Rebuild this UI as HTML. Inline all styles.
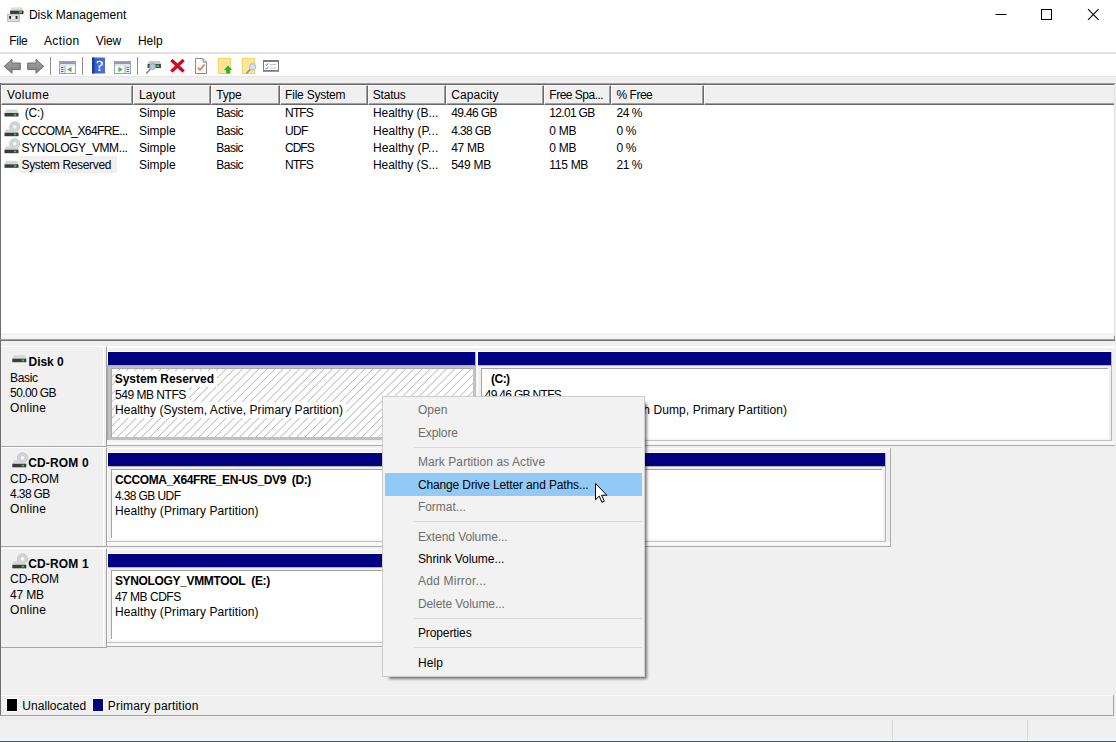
<!DOCTYPE html>
<html><head><meta charset="utf-8"><title>Disk Management</title>
<style>
html,body{margin:0;padding:0;}
body{width:1116px;height:742px;overflow:hidden;background:#fff;position:relative;font-family:"Liberation Sans",sans-serif;font-size:12px;color:#000;}
.a{position:absolute;}
.t{position:absolute;white-space:pre;line-height:16px;height:16px;}
.b{font-weight:bold;}
.hc{position:absolute;top:85px;height:20px;box-sizing:border-box;background:#f0f0f0;border-top:1px solid #fff;border-left:1px solid #fff;border-right:1px solid #696969;border-bottom:1px solid #696969;}
.hc:after{content:"";position:absolute;left:0;top:0;right:0;bottom:0;border-right:1px solid #a0a0a0;border-bottom:1px solid #a0a0a0;}
.hl{border-right:0;}.hl:after{border-right:0;}
.dh{position:absolute;left:1px;width:106px;height:100px;box-sizing:border-box;background:#f0f0f0;border-top:1px solid #fff;border-right:1px solid #a0a0a0;border-bottom:1px solid #a6a6a6;}
.dh:after{content:"";position:absolute;left:102px;top:0;bottom:0;width:1px;background:#fff;}
.bar{position:absolute;height:13px;background:#000080;}
.pbox{position:absolute;box-sizing:border-box;background:#fff;border:1px solid #a0a0a0;border-right-color:#e3e3e3;border-bottom-color:#e3e3e3;}
.sep{position:absolute;left:414px;width:228px;height:1px;background:#d7d7d7;}
.tsep{position:absolute;top:57px;width:1px;height:18px;background:#a0a0a0;}
</style></head><body>
<!-- title bar icon -->
<svg class="a" style="left:0;top:0" width="30" height="26" viewBox="0 0 30 26">
<defs><linearGradient id="gt" x1="0" y1="0" x2="0" y2="1"><stop offset="0" stop-color="#eceef0"/><stop offset="1" stop-color="#c4c8cc"/></linearGradient></defs>
<path d="M11.700 6.900h10.200l1.600 3.900h-13.400z" fill="url(#gt)"/>
<rect x="10.100" y="10.700" width="13.400" height="3.400" fill="#363636"/>
<rect x="18.900" y="11.300" width="3.100" height="1.900" fill="#2fd544"/>
<rect x="7.600" y="14.300" width="11.800" height="7.200" fill="#d9dbdd" stroke="#b4b6b8" stroke-width="0.900"/>
<rect x="11" y="16.900" width="4.800" height="1.300" fill="#f6f6f6"/>
<rect x="9.200" y="16" width="1.900" height="2.900" fill="#2a2a2a"/><rect x="15.600" y="16" width="1.900" height="2.900" fill="#2a2a2a"/>
</svg>
<!-- window controls -->
<svg class="a" style="left:990px;top:4px" width="120" height="22" viewBox="0 0 120 22">
<path d="M5.5 10.5h11" stroke="#000" stroke-width="1" fill="none"/>
<rect x="51.5" y="5.5" width="10" height="10" stroke="#000" stroke-width="1" fill="none"/>
<path d="M98 5.2l10.6 10.6M108.6 5.2l-10.600 10.600" stroke="#000" stroke-width="1.1" fill="none"/>
</svg>
<div class="a" style="left:0;top:52px;width:1116px;height:2px;background:#e1e1e1;"></div>
<!-- gray client background -->
<div class="a" style="left:0;top:76px;width:1116px;height:666px;background:#f0f0f0;"></div>
<div class="a" style="left:0;top:76px;width:1116px;height:1px;background:#e6e6e6;"></div>
<!--TB0-->
<svg class="a" style="left:0;top:53px" width="300" height="24" viewBox="0 53 300 24">
<defs>
<linearGradient id="ga" x1="0" y1="0" x2="0" y2="1"><stop offset="0" stop-color="#a8a8a8"/><stop offset="1" stop-color="#7c7c7c"/></linearGradient>
<linearGradient id="gh" x1="0" y1="0" x2="1" y2="0"><stop offset="0" stop-color="#1f3f9c"/><stop offset="0.25" stop-color="#3a5fd0"/><stop offset="1" stop-color="#4a6fe0"/></linearGradient>
</defs>
<!-- back / forward arrows -->
<path d="M4.300 66.300L12 59.300V63h8.300v6.600H12v3.700z" fill="url(#ga)" stroke="#6c6c6c" stroke-width="1" stroke-linejoin="round"/>
<path d="M43.700 66.300L36 59.300V63h-8.300v6.600H36v3.700z" fill="url(#ga)" stroke="#6c6c6c" stroke-width="1" stroke-linejoin="round"/>
<rect x="50" y="57" width="1" height="18" fill="#8d8d8d"/>
<rect x="82" y="57" width="1" height="18" fill="#8d8d8d"/>
<rect x="137" y="57" width="1" height="18" fill="#8d8d8d"/>
<!-- show/hide console tree -->
<g>
<rect x="59.500" y="61.500" width="16" height="12" fill="#fff" stroke="#9aa3b5" stroke-width="1"/>
<rect x="60" y="62" width="15" height="2" fill="#8f9bb4"/>
<rect x="60" y="64.500" width="15" height="1" fill="#c3c9d6"/>
<rect x="60" y="66" width="4.500" height="7" fill="#e4e8f0"/>
<rect x="64.500" y="66" width="1" height="7" fill="#9aa3b5"/>
<rect x="61" y="67" width="2.500" height="1" fill="#3a78d8"/><rect x="61" y="69" width="2.500" height="1" fill="#3a78d8"/><rect x="61" y="71" width="2.500" height="1" fill="#3a78d8"/>
<path d="M71.500 66.800v5.400l-4.300-2.700z" fill="#3fbf3f"/>
</g>
<!-- help -->
<rect x="92" y="57.500" width="13" height="16" fill="url(#gh)"/>
<rect x="92" y="57.500" width="2.500" height="16" fill="#1b3a8e" fill-opacity="0.700"/><text x="99.700" y="71.400" font-family="Liberation Serif,serif" font-size="15.500" fill="#fff" text-anchor="middle" stroke="#fff" stroke-width="0.300">?</text>
<!-- show/hide action pane -->
<g>
<rect x="114.500" y="61.500" width="16" height="12" fill="#fff" stroke="#9aa3b5" stroke-width="1"/>
<rect x="115" y="62" width="15" height="2" fill="#8f9bb4"/>
<rect x="115" y="64.500" width="15" height="1" fill="#c3c9d6"/>
<rect x="125.500" y="66" width="4.500" height="7" fill="#e4e8f0"/>
<rect x="124.500" y="66" width="1" height="7" fill="#9aa3b5"/>
<rect x="126.500" y="67" width="2.500" height="1" fill="#3a78d8"/><rect x="126.500" y="69" width="2.500" height="1" fill="#3a78d8"/><rect x="126.500" y="71" width="2.500" height="1" fill="#3a78d8"/>
<path d="M118.500 66.800v5.400l4.300-2.700z" fill="#3fbf3f"/>
</g>
<!-- connect / rescan drive -->
<g>
<path d="M149 61h10.500l1.500 3h-13.500z" fill="#c9c9c9"/>
<rect x="147.500" y="64" width="13.500" height="4" fill="#4a4a4a"/>
<rect x="156.500" y="65" width="2.500" height="2" fill="#2fd13f"/>
<circle cx="152.600" cy="66.500" r="3" fill="#bcd6ec" fill-opacity="0.900" stroke="#8fa4b8" stroke-width="1"/>
<path d="M150.300 69l-4 4.500" stroke="#6c7a88" stroke-width="1.300" fill="none"/>
</g>
<!-- delete X -->
<path d="M171.300 60l12.400 11.500M183.700 60l-12.400 11.500" stroke="#d00a1e" stroke-width="3.200" fill="none"/>
<!-- document check -->
<g>
<path d="M195.500 58.500h7.500l3.500 3.500v11.500h-11z" fill="#fafafa" stroke="#8c8c8c" stroke-width="1"/>
<path d="M203 58.500v3.500h3.500" fill="#e6e6e6" stroke="#8c8c8c" stroke-width="1"/>
<path d="M197.800 67.500l2.200 2.500l4.500-5.500" stroke="#ea6a30" stroke-width="1.400" fill="none"/>
</g>
<!-- yellow page + green arrow -->
<g>
<rect x="218.500" y="58.500" width="12" height="15" fill="#fbe596" stroke="#f3d26a" stroke-width="1"/>
<path d="M228 65.500l4 4.500h-2.200v3.500h-3.600v-3.500h-2.200z" fill="#19b92b"/>
</g>
<!-- yellow page + magnifier -->
<g>
<rect x="242.500" y="58.500" width="12" height="15" fill="#fbe596" stroke="#f3d26a" stroke-width="1"/>
<path d="M250.400 69.300l-4 4.200" stroke="#8a8a8a" stroke-width="1.400" fill="none"/>
<circle cx="252.600" cy="66.900" r="3.200" fill="#cfe4f4" stroke="#a9bccb" stroke-width="1"/>
</g>
<!-- properties list -->
<g>
<rect x="263.500" y="60.500" width="15" height="10.500" fill="#fff" stroke="#7a7a7a" stroke-width="1"/><rect x="263" y="70" width="16" height="1.500" fill="#7a7a7a"/>
<rect x="263" y="60" width="16" height="2" fill="#7a7a7a"/>
<path d="M265.500 64.500l1 1l1.800-2.200M265.500 68l1 1l1.800-2.200" stroke="#2f7fe0" stroke-width="1" fill="none"/>
<rect x="270" y="64" width="6" height="1" fill="#c4c4c4"/><rect x="270" y="67.500" width="6" height="1" fill="#c4c4c4"/>
</g>
</svg>
<!--TB1-->
<!-- list view frame -->
<div class="a" style="left:0;top:83px;width:1115px;height:1px;background:#a0a0a0;"></div>
<div class="a" style="left:0;top:84px;width:1115px;height:1px;background:#696969;"></div>
<div class="a" style="left:0;top:83px;width:1px;height:633px;background:#6d6d6d;"></div>
<div class="a" style="left:0;top:718px;width:1116px;height:1px;background:#e4e4e4;"></div>
<div class="a" style="left:1px;top:85px;width:1113px;height:248px;background:#fff;"></div>
<div class="a" style="left:1px;top:333px;width:1113px;height:6px;background:#f6f6f6;"></div><div class="a" style="left:1px;top:334px;width:1113px;height:1px;background:#efefef;"></div><div class="a" style="left:1px;top:337px;width:1113px;height:1px;background:#f0f0f0;"></div>
<div class="a" style="left:1114px;top:84px;width:1px;height:252px;background:#e3e3e3;"></div>
<!-- header cells -->
<div class="hc" style="left:1px;width:132px;"></div>
<div class="hc" style="left:133px;width:78px;"></div>
<div class="hc" style="left:211px;width:69px;"></div>
<div class="hc" style="left:280px;width:88px;"></div>
<div class="hc" style="left:368px;width:78px;"></div>
<div class="hc" style="left:446px;width:98px;"></div>
<div class="hc" style="left:544px;width:67px;"></div>
<div class="hc" style="left:611px;width:93px;"></div>
<div class="hc hl" style="left:704px;width:410px;"></div>
<!-- selected row -->
<div class="a" style="left:19px;top:156px;width:98px;height:17px;background:#f0f0f0;"></div>
<svg class="a" style="left:0;top:104px" width="24" height="72" viewBox="0 104 24 72"><path d="M6.0 109.5h11l1.500 3.500h-14z" fill="#d3d7db"/><rect x="4.5" y="113.0" width="14" height="3.500" fill="#3b3b3b"/><rect x="13.9" y="113.9" width="2.400" height="1.700" fill="#2ed23e"/><circle cx="14.7" cy="126.8" r="5" fill="#d6d9dc" stroke="#b4b8bc" stroke-width="0.800"/><circle cx="14.7" cy="126.8" r="2.500" fill="#f0f1f2" stroke="#b9bcc0" stroke-width="0.700"/><circle cx="14.7" cy="126.8" r="1.100" fill="#fff"/><path d="M6.0 129.2h11l1.500 3.500h-14z" fill="#d3d7db"/><rect x="4.5" y="132.7" width="14" height="3.500" fill="#3b3b3b"/><rect x="13.9" y="133.6" width="2.400" height="1.700" fill="#2ed23e"/><circle cx="14.7" cy="143.8" r="5" fill="#d6d9dc" stroke="#b4b8bc" stroke-width="0.800"/><circle cx="14.7" cy="143.8" r="2.500" fill="#f0f1f2" stroke="#b9bcc0" stroke-width="0.700"/><circle cx="14.7" cy="143.8" r="1.100" fill="#fff"/><path d="M6.0 146.2h11l1.500 3.500h-14z" fill="#d3d7db"/><rect x="4.5" y="149.7" width="14" height="3.500" fill="#3b3b3b"/><rect x="13.9" y="150.6" width="2.400" height="1.700" fill="#2ed23e"/><path d="M6.0 160.8h11l1.500 3.500h-14z" fill="#d3d7db"/><rect x="4.5" y="164.3" width="14" height="3.500" fill="#3b3b3b"/><rect x="13.9" y="165.2" width="2.400" height="1.700" fill="#2ed23e"/></svg>
<!-- lower pane -->
<div class="a" style="left:0;top:339px;width:1115px;height:1px;background:#a0a0a0;"></div><div class="a" style="left:1114px;top:336px;width:1px;height:5px;background:#8a8a8a;"></div>
<div class="a" style="left:0;top:340px;width:1115px;height:1px;background:#747474;"></div>
<div class="a" style="left:2px;top:346px;width:1112px;height:1px;background:#fff;"></div>
<!-- disk 0 -->
<div class="dh" style="top:346px;height:101px;"></div>
<div class="dh" style="top:447px;"></div>
<div class="dh" style="top:548px;"></div>
<div class="a" style="left:107px;top:347px;width:1007px;height:1px;background:#fff"></div><div class="a" style="left:107px;top:347px;width:1px;height:98px;background:#f8f8f8"></div><div class="a" style="left:107px;top:441px;width:1007px;height:4px;background:#f8f8f8"></div><div class="a" style="left:106px;top:445px;width:1009px;height:1px;background:#ababab"></div><div class="a" style="left:107px;top:351px;width:368px;height:1px;background:#fff"></div><div class="a" style="left:107px;top:351px;width:1px;height:90px;background:#fff"></div><div class="a" style="left:108px;top:352px;width:367px;height:13px;background:#000080"></div><div class="a" style="left:475px;top:352px;width:1px;height:89px;background:#b4b4b4"></div><div class="a" style="left:108px;top:365px;width:367px;height:1px;background:#b4b4b4"></div><div class="a" style="left:107px;top:365px;width:369px;height:75px;background:#c0c0c0"></div><div class="a" style="left:107px;top:365px;width:1px;height:75px;background:#a6a6a6"></div><div class="a" style="left:108px;top:365px;width:367px;height:1px;background:#a8a8a8"></div><div class="a" style="left:111px;top:368px;width:362px;height:1px;background:#a9a9a9"></div><div class="a" style="left:111px;top:368px;width:1px;height:69px;background:#a9a9a9"></div><svg class="a" style="left:112px;top:369px" width="361" height="68"><defs><pattern id="hb" width="8.16" height="8.16" patternUnits="userSpaceOnUse" patternTransform="translate(8.02 0)"><path d="M-1 9.16L9.16 -1M-1 1L1 -1M7.16 9.16L9.16 7.16" stroke="#a2a2a2" stroke-width="0.900" fill="none"/></pattern></defs><rect width="361" height="68" fill="#fff"/><rect width="361" height="68" fill="url(#hb)"/></svg><div class="a" style="left:477px;top:351px;width:634px;height:1px;background:#fff"></div><div class="a" style="left:477px;top:351px;width:1px;height:90px;background:#fff"></div><div class="a" style="left:478px;top:352px;width:633px;height:13px;background:#000080"></div><div class="a" style="left:1111px;top:352px;width:1px;height:89px;background:#b4b4b4"></div><div class="a" style="left:478px;top:365px;width:633px;height:1px;background:#b4b4b4"></div><div class="a" style="left:477px;top:440px;width:635px;height:1px;background:#c0c0c0"></div><div class="a" style="left:481px;top:368px;width:628px;height:72px;background:#f8f8f8"></div><div class="a" style="left:481px;top:368px;width:628px;height:70px;background:#fff"></div><div class="a" style="left:481px;top:368px;width:627px;height:1px;background:#a3a3a3"></div><div class="a" style="left:481px;top:368px;width:1px;height:69px;background:#a3a3a3"></div><div class="a" style="left:107px;top:448px;width:783px;height:1px;background:#fff"></div><div class="a" style="left:107px;top:448px;width:1px;height:98px;background:#f8f8f8"></div><div class="a" style="left:890px;top:448px;width:1px;height:99px;background:#ababab"></div><div class="a" style="left:107px;top:542px;width:783px;height:4px;background:#f8f8f8"></div><div class="a" style="left:106px;top:546px;width:785px;height:1px;background:#ababab"></div><div class="a" style="left:107px;top:452px;width:778px;height:1px;background:#fff"></div><div class="a" style="left:107px;top:452px;width:1px;height:90px;background:#fff"></div><div class="a" style="left:108px;top:453px;width:777px;height:13px;background:#000080"></div><div class="a" style="left:885px;top:453px;width:1px;height:89px;background:#b4b4b4"></div><div class="a" style="left:108px;top:466px;width:777px;height:1px;background:#b4b4b4"></div><div class="a" style="left:107px;top:541px;width:779px;height:1px;background:#c0c0c0"></div><div class="a" style="left:111px;top:469px;width:772px;height:72px;background:#f8f8f8"></div><div class="a" style="left:111px;top:469px;width:772px;height:70px;background:#fff"></div><div class="a" style="left:111px;top:469px;width:771px;height:1px;background:#a3a3a3"></div><div class="a" style="left:111px;top:469px;width:1px;height:69px;background:#a3a3a3"></div><div class="a" style="left:107px;top:549px;width:533px;height:1px;background:#fff"></div><div class="a" style="left:107px;top:549px;width:1px;height:97px;background:#f8f8f8"></div><div class="a" style="left:640px;top:549px;width:1px;height:98px;background:#ababab"></div><div class="a" style="left:107px;top:643px;width:533px;height:3px;background:#f8f8f8"></div><div class="a" style="left:106px;top:646px;width:535px;height:1px;background:#ababab"></div><div class="a" style="left:107px;top:553px;width:528px;height:1px;background:#fff"></div><div class="a" style="left:107px;top:553px;width:1px;height:90px;background:#fff"></div><div class="a" style="left:108px;top:554px;width:527px;height:13px;background:#000080"></div><div class="a" style="left:635px;top:554px;width:1px;height:89px;background:#b4b4b4"></div><div class="a" style="left:108px;top:567px;width:527px;height:1px;background:#b4b4b4"></div><div class="a" style="left:107px;top:642px;width:529px;height:1px;background:#c0c0c0"></div><div class="a" style="left:111px;top:570px;width:522px;height:72px;background:#f8f8f8"></div><div class="a" style="left:111px;top:570px;width:522px;height:70px;background:#fff"></div><div class="a" style="left:111px;top:570px;width:521px;height:1px;background:#a3a3a3"></div><div class="a" style="left:111px;top:570px;width:1px;height:69px;background:#a3a3a3"></div><svg class="a" style="left:8px;top:346px" width="24" height="230" viewBox="8 346 24 230"><path d="M13.8 355.2h11l1.500 3.500h-14z" fill="#d3d7db"/><rect x="12.3" y="358.7" width="14" height="3.500" fill="#3b3b3b"/><rect x="21.7" y="359.6" width="2.400" height="1.700" fill="#2ed23e"/><circle cx="22.5" cy="457.9" r="5" fill="#d6d9dc" stroke="#b4b8bc" stroke-width="0.800"/><circle cx="22.5" cy="457.9" r="2.500" fill="#f0f1f2" stroke="#b9bcc0" stroke-width="0.700"/><circle cx="22.5" cy="457.9" r="1.100" fill="#fff"/><path d="M13.8 460.3h11l1.500 3.500h-14z" fill="#d3d7db"/><rect x="12.3" y="463.8" width="14" height="3.500" fill="#3b3b3b"/><rect x="21.7" y="464.7" width="2.400" height="1.700" fill="#2ed23e"/><circle cx="22.5" cy="558.9" r="5" fill="#d6d9dc" stroke="#b4b8bc" stroke-width="0.800"/><circle cx="22.5" cy="558.9" r="2.500" fill="#f0f1f2" stroke="#b9bcc0" stroke-width="0.700"/><circle cx="22.5" cy="558.9" r="1.100" fill="#fff"/><path d="M13.8 561.3h11l1.500 3.500h-14z" fill="#d3d7db"/><rect x="12.3" y="564.8" width="14" height="3.500" fill="#3b3b3b"/><rect x="21.7" y="565.7" width="2.400" height="1.700" fill="#2ed23e"/></svg>
<!-- legend -->
<div class="a" style="left:1px;top:695px;width:1113px;height:1px;background:#fafafa;"></div>
<div class="a" style="left:0px;top:715px;width:1114px;height:1px;background:#a0a0a0;"></div>
<div class="a" style="left:1113px;top:695px;width:1px;height:21px;background:#a0a0a0;"></div>
<div class="a" style="left:7px;top:699px;width:10px;height:12px;background:#000;outline:1px solid #fff;"></div>
<div class="a" style="left:93px;top:699px;width:10px;height:12px;background:#000080;outline:1px solid #fff;"></div>
<!-- status bar -->
<div class="a" style="left:892px;top:720px;width:1px;height:20px;background:#d7d7d7;"></div>
<div class="a" style="left:1027px;top:720px;width:1px;height:20px;background:#d7d7d7;"></div>
<div class="a" style="left:0;top:740px;width:1116px;height:1px;background:#fafafa;"></div><div class="a" style="left:0;top:741px;width:1116px;height:1px;background:#215d7e;"></div>
<div class="t" style="left:28.9px;top:7px;letter-spacing:0.052px;">Disk Management</div>
<div class="t" style="left:9.2px;top:33px;letter-spacing:-0.261px;">File</div>
<div class="t" style="left:44.0px;top:33px;letter-spacing:0.357px;">Action</div>
<div class="t" style="left:95.8px;top:33px;letter-spacing:-0.124px;">View</div>
<div class="t" style="left:137.9px;top:33px;letter-spacing:0.028px;">Help</div>
<div class="t" style="left:6.9px;top:87px;letter-spacing:0.395px;">Volume</div>
<div class="t" style="left:138.9px;top:87px;letter-spacing:0.078px;">Layout</div>
<div class="t" style="left:216.3px;top:87px;letter-spacing:-0.179px;">Type</div>
<div class="t" style="left:285.1px;top:87px;letter-spacing:-0.226px;">File System</div>
<div class="t" style="left:372.7px;top:87px;letter-spacing:-0.189px;">Status</div>
<div class="t" style="left:451.2px;top:87px;letter-spacing:0.077px;">Capacity</div>
<div class="t" style="left:549.3px;top:87px;letter-spacing:-0.498px;">Free Spa...</div>
<div class="t" style="left:616.6px;top:87px;letter-spacing:-0.498px;">% Free</div>
<div class="t" style="left:24.7px;top:105px;letter-spacing:-0.225px;">(C:)</div>
<div class="t" style="left:138.9px;top:105px;letter-spacing:0.002px;">Simple</div>
<div class="t" style="left:216.3px;top:105px;letter-spacing:-0.509px;">Basic</div>
<div class="t" style="left:285.1px;top:105px;letter-spacing:-0.861px;">NTFS</div>
<div class="t" style="left:373.0px;top:105px;letter-spacing:-0.056px;">Healthy (B...</div>
<div class="t" style="left:451.2px;top:105px;letter-spacing:-0.613px;">49.46 GB</div>
<div class="t" style="left:549.3px;top:105px;letter-spacing:-0.675px;">12.01 GB</div>
<div class="t" style="left:616.6px;top:105px;letter-spacing:-0.515px;">24 %</div>
<div class="t" style="left:21.5px;top:123px;letter-spacing:-0.585px;">CCCOMA_X64FRE...</div>
<div class="t" style="left:138.9px;top:123px;letter-spacing:0.002px;">Simple</div>
<div class="t" style="left:216.3px;top:123px;letter-spacing:-0.509px;">Basic</div>
<div class="t" style="left:285.1px;top:123px;letter-spacing:-0.724px;">UDF</div>
<div class="t" style="left:373.0px;top:123px;letter-spacing:0.063px;">Healthy (P...</div>
<div class="t" style="left:451.2px;top:123px;letter-spacing:-0.604px;">4.38 GB</div>
<div class="t" style="left:549.3px;top:123px;letter-spacing:-0.254px;">0 MB</div>
<div class="t" style="left:616.6px;top:123px;letter-spacing:-0.463px;">0 %</div>
<div class="t" style="left:21.5px;top:140px;letter-spacing:-0.402px;">SYNOLOGY_VMM...</div>
<div class="t" style="left:138.9px;top:140px;letter-spacing:0.002px;">Simple</div>
<div class="t" style="left:216.3px;top:140px;letter-spacing:-0.509px;">Basic</div>
<div class="t" style="left:285.1px;top:140px;letter-spacing:-1.043px;">CDFS</div>
<div class="t" style="left:373.0px;top:140px;letter-spacing:0.063px;">Healthy (P...</div>
<div class="t" style="left:451.2px;top:140px;letter-spacing:-0.278px;">47 MB</div>
<div class="t" style="left:549.3px;top:140px;letter-spacing:-0.254px;">0 MB</div>
<div class="t" style="left:616.6px;top:140px;letter-spacing:-0.463px;">0 %</div>
<div class="t" style="left:21.5px;top:157px;letter-spacing:-0.340px;">System Reserved</div>
<div class="t" style="left:138.9px;top:157px;letter-spacing:0.002px;">Simple</div>
<div class="t" style="left:216.3px;top:157px;letter-spacing:-0.509px;">Basic</div>
<div class="t" style="left:285.1px;top:157px;letter-spacing:-0.861px;">NTFS</div>
<div class="t" style="left:373.0px;top:157px;letter-spacing:-0.056px;">Healthy (S...</div>
<div class="t" style="left:451.2px;top:157px;letter-spacing:-0.260px;">549 MB</div>
<div class="t" style="left:549.3px;top:157px;letter-spacing:-0.278px;">115 MB</div>
<div class="t" style="left:616.6px;top:157px;letter-spacing:-0.515px;">21 %</div>
<div class="t b" style="left:28.6px;top:354px;letter-spacing:-0.077px;">Disk 0</div>
<div class="t" style="left:10.1px;top:370px;letter-spacing:-0.369px;">Basic</div>
<div class="t" style="left:10.1px;top:385px;letter-spacing:-0.613px;">50.00 GB</div>
<div class="t" style="left:10.1px;top:400px;letter-spacing:0.235px;">Online</div>
<div class="t b" style="left:28.2px;top:455px;letter-spacing:0.157px;">CD-ROM 0</div>
<div class="t" style="left:10.1px;top:471px;letter-spacing:-0.088px;">CD-ROM</div>
<div class="t" style="left:10.1px;top:486px;letter-spacing:-0.633px;">4.38 GB</div>
<div class="t" style="left:10.1px;top:501px;letter-spacing:0.235px;">Online</div>
<div class="t b" style="left:28.2px;top:556px;letter-spacing:0.157px;">CD-ROM 1</div>
<div class="t" style="left:10.1px;top:571px;letter-spacing:-0.088px;">CD-ROM</div>
<div class="t" style="left:10.1px;top:587px;letter-spacing:-0.178px;">47 MB</div>
<div class="t" style="left:10.1px;top:602px;letter-spacing:0.235px;">Online</div>
<div class="t b" style="left:114.8px;top:371px;letter-spacing:-0.064px;background:#fff;padding-right:3px;">System Reserved</div>
<div class="t" style="left:115.0px;top:387px;letter-spacing:-0.476px;background:#fff;padding-right:3px;">549 MB NTFS</div>
<div class="t" style="left:115.0px;top:402px;letter-spacing:0.047px;background:#fff;padding-right:3px;">Healthy (System, Active, Primary Partition)</div>
<div class="t b" style="left:491.1px;top:371px;letter-spacing:-0.564px;">(C:)</div>
<div class="t" style="left:484.7px;top:387px;letter-spacing:-0.690px;">49.46 GB NTFS</div>
<div class="t" style="left:484.7px;top:402px;letter-spacing:-0.118px;">Healthy (Boot, Page File, Crash</div>
<div class="t" style="left:653.4px;top:402px;letter-spacing:0.097px;">Dump, Primary Partition)</div>
<div class="t b" style="left:114.9px;top:472px;letter-spacing:-0.392px;">CCCOMA_X64FRE_EN-US_DV9&nbsp; (D:)</div>
<div class="t" style="left:114.9px;top:488px;letter-spacing:-0.594px;">4.38 GB UDF</div>
<div class="t" style="left:114.9px;top:503px;letter-spacing:0.111px;">Healthy (Primary Partition)</div>
<div class="t b" style="left:114.9px;top:573px;letter-spacing:-0.339px;">SYNOLOGY_VMMTOOL&nbsp; (E:)</div>
<div class="t" style="left:114.9px;top:589px;letter-spacing:-0.489px;">47 MB CDFS</div>
<div class="t" style="left:114.9px;top:604px;letter-spacing:0.111px;">Healthy (Primary Partition)</div>
<div class="t" style="left:22.3px;top:698px;letter-spacing:0.039px;">Unallocated</div>
<div class="t" style="left:107.8px;top:698px;letter-spacing:0.197px;">Primary partition</div>
<!-- context menu -->
<div class="a" style="left:382px;top:396px;width:263px;height:281px;box-sizing:border-box;background:#f2f2f2;border:1px solid #ccc;box-shadow:4.400px 4.400px 2.600px -2.700px rgba(0,0,0,0.500);"></div>
<div class="a" style="left:385px;top:473px;width:257px;height:22.500px;background:#91c9f7;"></div>
<div class="sep" style="top:447px"></div><div class="sep" style="top:521px"></div><div class="sep" style="top:618px"></div><div class="sep" style="top:647px"></div>
<div class="t" style="left:417.9px;top:402px;letter-spacing:0.035px;color:#6d6d6d;">Open</div>
<div class="t" style="left:417.9px;top:425px;letter-spacing:-0.098px;color:#6d6d6d;">Explore</div>
<div class="t" style="left:417.9px;top:454px;letter-spacing:0.080px;color:#6d6d6d;">Mark Partition as Active</div>
<div class="t" style="left:417.9px;top:477px;letter-spacing:-0.128px;">Change Drive Letter and Paths...</div>
<div class="t" style="left:417.9px;top:499px;letter-spacing:-0.013px;color:#6d6d6d;">Format...</div>
<div class="t" style="left:417.9px;top:529px;letter-spacing:-0.065px;color:#6d6d6d;">Extend Volume...</div>
<div class="t" style="left:417.9px;top:551px;letter-spacing:-0.067px;">Shrink Volume...</div>
<div class="t" style="left:417.9px;top:573px;letter-spacing:0.234px;color:#6d6d6d;">Add Mirror...</div>
<div class="t" style="left:417.9px;top:596px;letter-spacing:-0.079px;color:#6d6d6d;">Delete Volume...</div>
<div class="t" style="left:417.9px;top:625px;letter-spacing:-0.100px;">Properties</div>
<div class="t" style="left:417.9px;top:655px;letter-spacing:0.153px;">Help</div>
<!-- cursor -->
<svg class="a" style="left:594px;top:482px" width="14" height="22" viewBox="0 0 14 22">
<path d="M1.5 1.5v16.300l3.800-3.700 2.600 6.200 2.400-1-2.600-6.100h5.200z" fill="#fff" stroke="#000" stroke-width="1" stroke-linejoin="miter"/>
</svg>
</body></html>
